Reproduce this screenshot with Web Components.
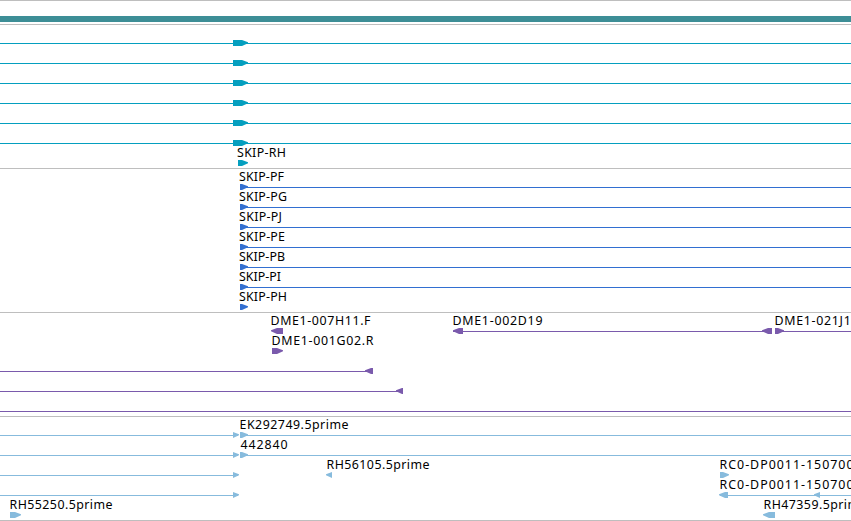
<!DOCTYPE html>
<html lang="en">
<head>
<meta charset="utf-8">
<title>Genome browser</title>
<style>
	body {
		margin: 0;
		background: #fff;
		overflow: hidden;
		font-family: "Noto Sans", "DejaVu Sans", sans-serif;
		font-size: 12.4px;
	}
</style>
</head>
<body>
<genome-view>
	<genome-track><scale-bar></scale-bar></genome-track>

	<genome-track color="#059fbf">
		<genome-lane lines="0-851" marks="233-248"></genome-lane>
		<genome-lane lines="0-851" marks="233-248"></genome-lane>
		<genome-lane lines="0-851" marks="233-248"></genome-lane>
		<genome-lane lines="0-851" marks="233-248"></genome-lane>
		<genome-lane lines="0-851" marks="233-248"></genome-lane>
		<genome-lane lines="0-851" marks="233-248"></genome-lane>
		<genome-lane marks="238-248" labels="SKIP-RH@237:49"></genome-lane>
	</genome-track>

	<genome-track color="#326fd1">
		<genome-lane lines="240-851" marks="240-248" labels="SKIP-PF@239:45"></genome-lane>
		<genome-lane lines="240-851" marks="240-248" labels="SKIP-PG@239:48"></genome-lane>
		<genome-lane lines="240-851" marks="240-248" labels="SKIP-PJ@239:43"></genome-lane>
		<genome-lane lines="240-851" marks="240-248" labels="SKIP-PE@239:46"></genome-lane>
		<genome-lane lines="240-851" marks="240-248" labels="SKIP-PB@239:46"></genome-lane>
		<genome-lane lines="240-851" marks="240-248" labels="SKIP-PI@239:42"></genome-lane>
		<genome-lane marks="240-248" labels="SKIP-PH@239:48"></genome-lane>
	</genome-track>

	<genome-track color="#7a5aac">
		<genome-lane lines="453-772 775-851" marks="283-271 463-453 772-762 775-784" labels="DME1-007H11.F@270.5:100 DME1-002D19@452.5:90 DME1-021J11@774.5:84"></genome-lane>
		<genome-lane marks="272-283" labels="DME1-001G02.R@271.5:102"></genome-lane>
		<genome-lane lines="0-373" marks="373-365"></genome-lane>
		<genome-lane lines="0-403" marks="403-396"></genome-lane>
		<genome-lane lines="0-851"></genome-lane>
	</genome-track>

	<genome-track color="#87bbdd">
		<genome-lane lines="0-238 240-851" marks="233-239 240-248" labels="EK292749.5prime@239.5:109"></genome-lane>
		<genome-lane lines="0-238 240-851" marks="233-239 240-248" labels="442840@240.5:47"></genome-lane>
		<genome-lane lines="0-238" marks="233-239 332-326 720-729" labels="RH56105.5prime@326.5:103 RC0-DP0011-150700@719.5:134"></genome-lane>
		<genome-lane lines="0-238 720-851" marks="233-239 728-719 820-814" labels="RC0-DP0011-150700@719.5:134"></genome-lane>
		<genome-lane marks="10-21 775-763" labels="RH55250.5prime@9.5:103 RH47359.5prime@763.5:103"></genome-lane>
	</genome-track>
</genome-view>

<script>
const viewTemplate = document.createElement('template');
viewTemplate.innerHTML = `
<style>
	:host {
		display: flex;
		flex-direction: column;
		width: 851px;
		border-bottom: 1px solid #bebebe;
	}
</style>
<slot></slot>
`;

const trackTemplate = document.createElement('template');
trackTemplate.innerHTML = `
<style>
	:host {
		display: flex;
		flex-direction: column;
		border-top: 1px solid #bebebe;
		padding-top: 3px;
	}
</style>
<slot></slot>
`;

const scaleTemplate = document.createElement('template');
scaleTemplate.innerHTML = `
<style>
	:host {
		display: block;
		padding: 12px 0 2px;
	}
	div {
		height: 6px;
		background: #3d8e96;
	}
</style>
<div></div>
`;

const laneTemplate = document.createElement('template');
laneTemplate.innerHTML = `
<style>
	:host {
		display: block;
		height: 20px;
	}
	svg {
		display: block;
		overflow: visible;
	}
	rect, path {
		fill: var(--track-color);
	}
	text {
		fill: #000;
	}
</style>
<svg width="851" height="20"></svg>
`;

class GenomeView extends HTMLElement {
	connectedCallback() {
		this.attachShadow({ mode: 'open' }).appendChild(viewTemplate.content.cloneNode(true));
	}
}

class GenomeTrack extends HTMLElement {
	connectedCallback() {
		this.attachShadow({ mode: 'open' }).appendChild(trackTemplate.content.cloneNode(true));
		this.style.setProperty('--track-color', this.getAttribute('color'));
	}
}

class ScaleBar extends HTMLElement {
	connectedCallback() {
		this.attachShadow({ mode: 'open' }).appendChild(scaleTemplate.content.cloneNode(true));
	}
}

class GenomeLane extends HTMLElement {
	connectedCallback() {
		const root = this.attachShadow({ mode: 'open' });
		root.appendChild(laneTemplate.content.cloneNode(true));
		const svg = root.querySelector('svg');

		this.list('lines').forEach((item) => {
			const [from, to] = item.split('-').map(Number);
			this.draw(svg, 'rect', { x: from, y: 15, width: to - from, height: 1 });
		});

		// A mark runs from its flat end to its tip, so the order gives the strand
		this.list('marks').forEach((item) => {
			const [tail, tip] = item.split('-').map(Number);
			const dir = tip > tail ? 1 : -1;
			const neck = tip - dir * Math.min(6, Math.abs(tip - tail));
			this.draw(svg, 'path', { d: `M${tail} 12H${neck}L${tip} 14.3V15.3L${neck} 18H${tail}Z` });
		});

		this.list('labels').forEach((item) => {
			const [name, place] = item.split('@');
			const [x, width] = place.split(':');
			const text = this.draw(svg, 'text', { x, y: 9, textLength: width });
			text.textContent = name;
		});
	}

	list(name) {
		return (this.getAttribute(name) || '').split(' ').filter(Boolean);
	}

	draw(svg, tag, attrs) {
		const node = document.createElementNS('http://www.w3.org/2000/svg', tag);
		Object.keys(attrs).forEach((key) => node.setAttribute(key, attrs[key]));
		svg.appendChild(node);
		return node;
	}
}

customElements.define('genome-view', GenomeView);
customElements.define('genome-track', GenomeTrack);
customElements.define('scale-bar', ScaleBar);
customElements.define('genome-lane', GenomeLane);
</script>
</body>
</html>
